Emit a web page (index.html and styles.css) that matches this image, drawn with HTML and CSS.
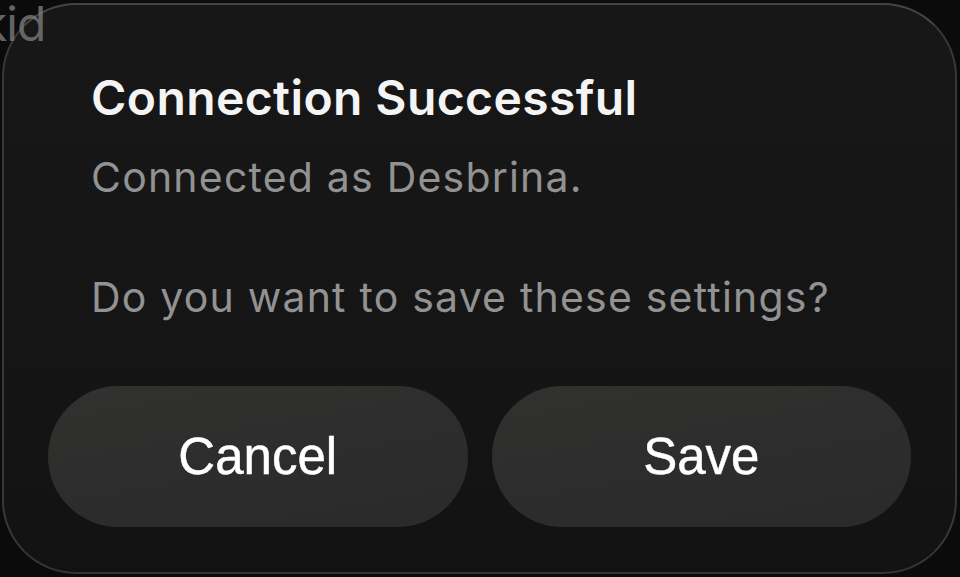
FILE: index.html
```html
<!DOCTYPE html>
<html lang="en">
<head>
<meta charset="utf-8">
<title>Connection Successful</title>
<link rel="stylesheet" href="styles.css">
</head>
<body>
<div class="backdrop-text">kid</div>
<div class="dialog" role="dialog" aria-labelledby="dlg-title">
  <div class="dialog-body">
    <h1 id="dlg-title" class="dialog-title">Connection Successful</h1>
    <p class="dialog-msg">Connected as Desbrina.</p>
    <p class="dialog-msg dialog-question">Do you want to save these settings?</p>
  </div>
  <div class="dialog-actions">
    <button class="btn">Cancel</button>
    <button class="btn">Save</button>
  </div>
</div>
</body>
</html>
```

FILE: styles.css
```css
html, body {
  margin: 0;
  padding: 0;
  width: 960px;
  height: 577px;
  overflow: hidden;
  background: #0b0b0b;
  font-family: Inter, "Noto Sans", sans-serif;
}

body {
  position: relative;
  padding: 3px 3px 3px 2px;
  box-sizing: border-box;
}

.backdrop-text {
  position: absolute;
  z-index: 2;
  left: -19px;
  top: -6px;
  font-size: 48px;
  line-height: 60px;
  letter-spacing: -1px;
  color: rgba(125, 125, 125, 0.8);
}

.dialog {
  position: relative;
  z-index: 1;
  width: 955px;
  height: 571px;
  box-sizing: border-box;
  border: 2px solid #383838;
  border-top-color: #444;
  border-bottom-color: #343430;
  border-radius: 74px;
  background: linear-gradient(180deg, #171717 0%, #151515 60%, #121212 100%);
  padding: 64px 44px 45px 44px;
  display: flex;
  flex-direction: column;
}

.dialog-body {
  padding-left: 43px;
  flex: 1;
}

.dialog-title {
  margin: 0;
  font-size: 48px;
  line-height: 58px;
  font-weight: 600;
  color: #f4f4f4;
  letter-spacing: 0.4px;
}

.dialog-msg {
  margin: 20px 0 0 0;
  font-size: 41px;
  line-height: 60px;
  font-weight: 400;
  color: #929292;
  letter-spacing: 1.2px;
}

.dialog-question {
  margin-top: 60px;
}

.dialog-actions {
  display: flex;
  gap: 24px;
}

.btn {
  flex: 1;
  height: 141px;
  border: none;
  border-radius: 71px;
  background: linear-gradient(170deg, #31312f 0%, #2d2d2d 50%, #2a2a2a 100%);
  color: #ffffff;
  font-family: "Liberation Sans", Arial, sans-serif;
  font-size: 51px;
  font-weight: 400;
  -webkit-text-stroke: 0.5px #ffffff;
  padding: 0;
  cursor: pointer;
}
```
